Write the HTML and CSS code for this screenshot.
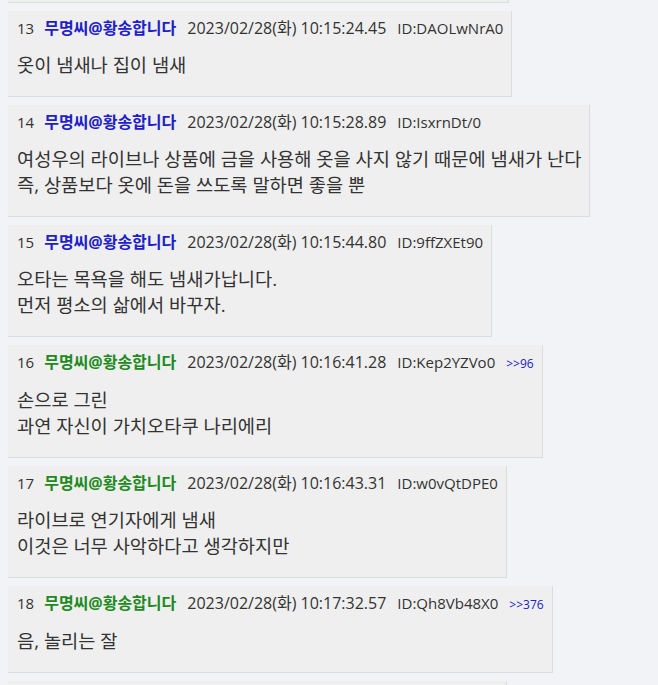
FILE: index.html
```
<!DOCTYPE html>
<html lang="ko">
<head>
<meta charset="utf-8">
<link rel="stylesheet" href="styles.css">
</head>
<body>
<div class="thread">
  <div class="post stub stub-top"></div>
  <div class="post">
    <div class="meta"><span class="num">13</span><span class="name blue">무명씨@황송합니다</span><span class="date">2023/02/28(화) 10:15:24.45</span><span class="uid">ID:DAOLwNrA0</span></div>
    <div class="message">옷이 냄새나 집이 냄새</div>
  </div>
  <div class="post">
    <div class="meta"><span class="num">14</span><span class="name blue">무명씨@황송합니다</span><span class="date">2023/02/28(화) 10:15:28.89</span><span class="uid">ID:IsxrnDt/0</span></div>
    <div class="message">여성우의 라이브나 상품에 금을 사용해 옷을 사지 않기 때문에 냄새가 난다<br>즉, 상품보다 옷에 돈을 쓰도록 말하면 좋을 뿐</div>
  </div>
  <div class="post">
    <div class="meta"><span class="num">15</span><span class="name blue">무명씨@황송합니다</span><span class="date">2023/02/28(화) 10:15:44.80</span><span class="uid">ID:9ffZXEt90</span></div>
    <div class="message">오타는 목욕을 해도 냄새가납니다.<br>먼저 평소의 삶에서 바꾸자.</div>
  </div>
  <div class="post">
    <div class="meta"><span class="num">16</span><span class="name green">무명씨@황송합니다</span><span class="date">2023/02/28(화) 10:16:41.28</span><span class="uid">ID:Kep2YZVo0</span><span class="ref">&gt;&gt;96</span></div>
    <div class="message">손으로 그린<br>과연 자신이 가치오타쿠 나리에리</div>
  </div>
  <div class="post">
    <div class="meta"><span class="num">17</span><span class="name green">무명씨@황송합니다</span><span class="date">2023/02/28(화) 10:16:43.31</span><span class="uid">ID:w0vQtDPE0</span></div>
    <div class="message">라이브로 연기자에게 냄새<br>이것은 너무 사악하다고 생각하지만</div>
  </div>
  <div class="post">
    <div class="meta"><span class="num">18</span><span class="name green">무명씨@황송합니다</span><span class="date">2023/02/28(화) 10:17:32.57</span><span class="uid">ID:Qh8Vb48X0</span><span class="ref">&gt;&gt;376</span></div>
    <div class="message">음, 놀리는 잘</div>
  </div>
  <div class="post stub stub-bottom"></div>
</div>
</body>
</html>
```
FILE: styles.css
```
html, body {
  margin: 0;
  padding: 0;
  background: #f2f3f7;
  overflow: hidden;
}
body {
  padding: 0 8px;
  font-family: "Open Sans", "Noto Sans CJK KR", sans-serif;
  color: #333;
}
.thread {
  display: flex;
  flex-direction: column;
  align-items: flex-start;
  gap: 8px;
  margin-top: -81px;
}
.post {
  background: #efefef;
  border-right: 1px solid #ddd;
  border-bottom: 1px solid #ddd;
  padding: 8px 8px 8px 9px;
}
.stub {
  box-sizing: border-box;
  height: 84px;
  padding: 0;
}
.stub-top { width: 501px; }
.stub-bottom { width: 499px; }
.meta {
  display: flex;
  align-items: baseline;
  gap: 11px;
  font-size: 16px;
  line-height: 19px;
  white-space: nowrap;
}
.num {
  font-size: 15px;
  margin-right: -1px;
}
.uid { font-size: 15px; }
.name {
  font-weight: bold;
}
.blue { color: #2020c8; }
.green { color: #208a20; }
.ref {
  font-size: 12px;
  color: #2020c8;
}
.message {
  font-size: 18.7px;
  line-height: 26px;
  margin: 14px 0 10px;
  white-space: nowrap;
}
```
